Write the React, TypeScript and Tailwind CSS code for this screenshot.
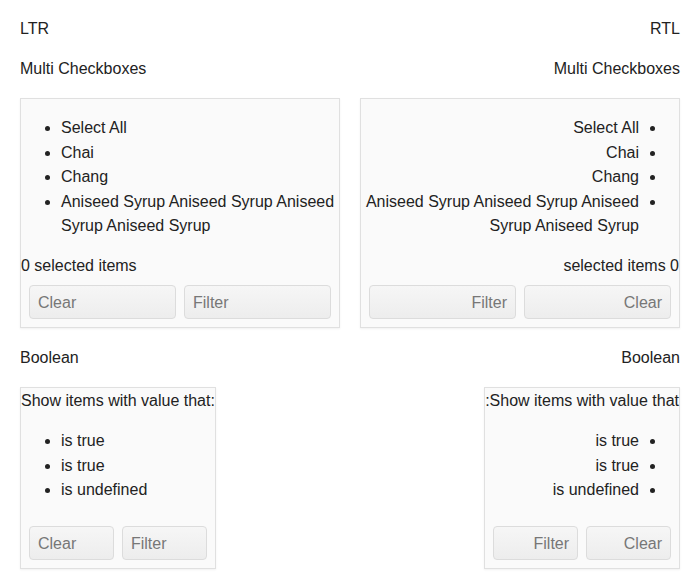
import React from "react";

const items = ["Select All", "Chai", "Chang", "Aniseed Syrup Aniseed Syrup Aniseed Syrup Aniseed Syrup"];
const boolItems = ["is true", "is true", "is undefined"];

function FilterButtons() {
    return (
        <div className="flex gap-2 px-2 pt-2 pb-2">
            <button className="flex-1 h-[34px] px-2 pt-[2px] text-start text-[#777] rounded border border-[#dcdcdc] bg-gradient-to-b from-[#f6f6f6] to-[#ededed]">
                Clear
            </button>
            <button className="flex-1 h-[34px] px-2 pt-[2px] text-start text-[#777] rounded border border-[#dcdcdc] bg-gradient-to-b from-[#f6f6f6] to-[#ededed]">
                Filter
            </button>
        </div>
    );
}

function Column({ dir, title }: { dir: "ltr" | "rtl"; title: string }) {
    return (
        <div dir={dir} className="flex flex-col items-start">
            <div className="leading-[18px]">{title}</div>

            <div className="mt-[22px] leading-[18px]">Multi Checkboxes</div>
            <div className="mt-[20px] w-full border border-[#e0e0e0] bg-[#fafafa] shadow-[0_1px_2px_rgba(0,0,0,0.06)]">
                <ul className="list-disc ps-10 mt-[17px] mb-[15px] leading-[24.5px]">
                    {items.map((item, i) => (
                        <li key={i}>{item}</li>
                    ))}
                </ul>
                <div className="leading-[23.5px]">0 selected items</div>
                <FilterButtons />
            </div>

            <div className="mt-[21px] leading-[18px]">Boolean</div>
            <div className="mt-[20px] w-fit border border-[#e0e0e0] bg-[#fafafa] shadow-[0_1px_2px_rgba(0,0,0,0.06)]">
                <div className="pt-px leading-6">Show items with value that:</div>
                <ul className="list-disc ps-10 mt-4 mb-[15px] leading-[24.5px]">
                    {boolItems.map((item, i) => (
                        <li key={i}>{item}</li>
                    ))}
                </ul>
                <FilterButtons />
            </div>
        </div>
    );
}

export default function App() {
    return (
        <div className="p-5 grid grid-cols-2 gap-5 text-base text-[#222] font-['Liberation_Sans',Arial,sans-serif]">
            <Column dir="ltr" title="LTR" />
            <Column dir="rtl" title="RTL" />
        </div>
    );
}
